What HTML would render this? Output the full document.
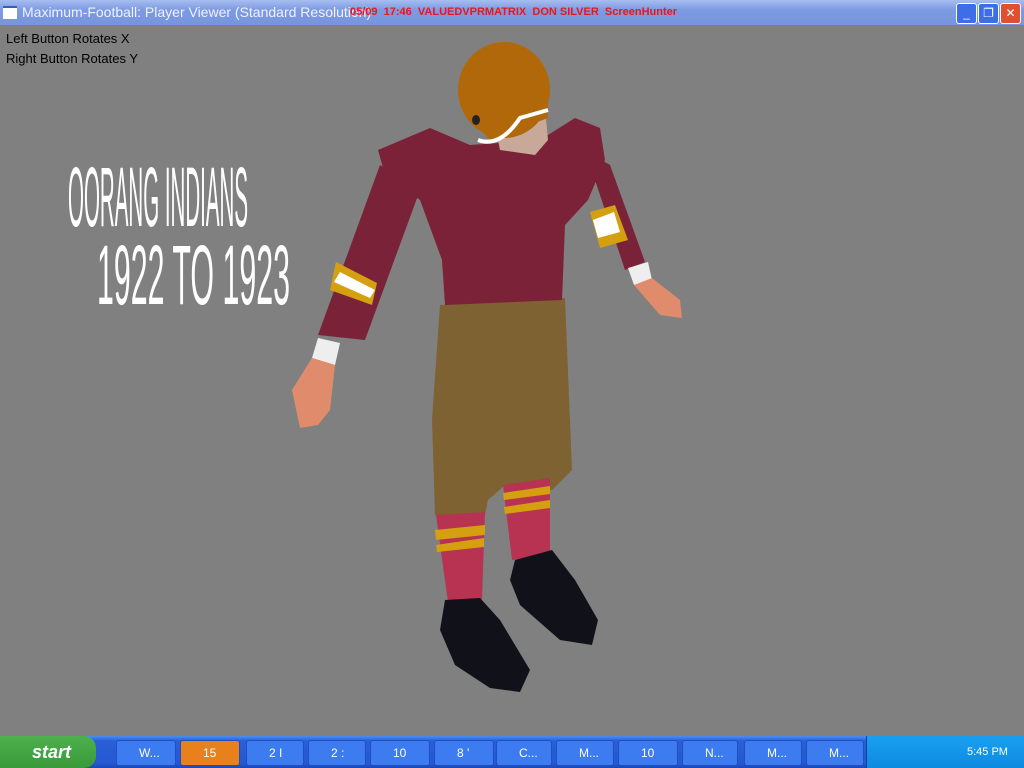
<!DOCTYPE html>
<html><head><meta charset="utf-8"><style>
html,body{margin:0;padding:0;width:1024px;height:768px;overflow:hidden;background:#808080;font-family:"Liberation Sans",sans-serif}
.tb{position:absolute;left:0;top:0;width:1024px;height:25px;background:linear-gradient(#a6bdf0,#7d9ae2 40%,#7894dc);}
.tb .t{position:absolute;left:22px;top:4px;color:#eef2ff;font-size:14px}
.tb .r{position:absolute;left:350px;top:6px;color:#e81818;font-size:11px;font-weight:bold}
.ic{position:absolute;left:3px;top:6px;width:14px;height:11px;background:#fff;border-top:2px solid #3060c0}
.btn{position:absolute;top:3px;width:19px;height:19px;border:1px solid #fff;border-radius:3px;background:#3d6ee8;color:#fff;font-size:12px;text-align:center;line-height:19px}
.lab{position:absolute;left:6px;font-size:13px;color:#000}
.task{position:absolute;left:0;top:736px;width:1024px;height:32px;background:linear-gradient(#4c8ef5,#2a5fd8 15%,#2558d2 85%,#1b47b8)}
.start{position:absolute;left:0;top:736px;width:96px;height:32px;background:linear-gradient(#4cb04c,#3a9a3a);border-radius:0 12px 12px 0;color:#fff;font-style:italic;font-weight:bold;font-size:18px;line-height:32px;text-indent:32px}
.it{position:absolute;top:740px;height:24px;background:#3c7cf0;border:1px solid #2050c0;border-radius:3px;color:#fff;font-size:12px;line-height:24px;text-indent:22px}
.tray{position:absolute;left:866px;top:736px;width:158px;height:32px;background:linear-gradient(#1aa0f0,#0d8ae0);border-left:1px solid #10409a;color:#fff;font-size:11px}
</style></head><body>
<div class="tb"><div class="ic"></div><div class="t">Maximum-Football: Player Viewer (Standard Resolution)</div>
<div class="r">05/09&nbsp; 17:46&nbsp; VALUEDVPRMATRIX&nbsp; DON SILVER&nbsp; ScreenHunter</div>
<div class="btn" style="left:956px">_</div><div class="btn" style="left:978px">❐</div><div class="btn" style="left:1000px;background:#e05030">✕</div></div>
<div class="lab" style="top:31px">Left Button Rotates X</div>
<div class="lab" style="top:51px">Right Button Rotates Y</div>
<svg width="1024" height="768" style="position:absolute;left:0;top:0">
<text x="68" y="226" font-family="Liberation Sans" font-size="84" fill="#fff" textLength="180" lengthAdjust="spacingAndGlyphs">OORANG INDIANS</text>
<text x="97" y="304" font-family="Liberation Sans" font-size="84" fill="#fff" textLength="193" lengthAdjust="spacingAndGlyphs">1922  TO 1923</text>
<polygon points="380,165 420,190 365,340 318,335" fill="#7a2238"/>
<polygon points="336,262 377,283 372,305 330,290" fill="#d4a010"/>
<polygon points="340,272 375,290 370,298 334,282" fill="#fff"/>
<polygon points="318,338 340,343 335,365 312,358" fill="#eee"/>
<polygon points="312,358 335,365 330,410 318,425 300,428 292,390" fill="#e08c6c"/>
<polygon points="585,150 610,165 645,262 625,270" fill="#7a2238"/>
<polygon points="590,212 615,205 628,240 600,248" fill="#d4a010"/>
<polygon points="593,220 614,212 620,232 598,238" fill="#fff"/>
<polygon points="628,268 648,262 652,280 634,285" fill="#eee"/>
<polygon points="634,285 652,278 680,300 682,318 660,315" fill="#e08c6c"/>
<polygon points="440,305 565,298 572,470 552,490 505,485 488,500 485,515 435,515 432,420" fill="#7e6232"/>
<polygon points="436,515 485,512 482,600 448,602" fill="#b83252"/>
<polygon points="435,530 485,525 485,535 436,540" fill="#d4a010"/>
<polygon points="436,545 484,538 484,547 437,552" fill="#d4a010"/>
<polygon points="503,485 550,478 550,555 512,560" fill="#b83252"/>
<polygon points="503,493 550,486 550,494 504,500" fill="#d4a010"/>
<polygon points="504,507 550,500 550,508 505,514" fill="#d4a010"/>
<polygon points="445,600 480,598 500,620 530,670 520,692 490,688 455,665 440,630" fill="#111119"/>
<polygon points="515,560 552,550 575,580 598,620 592,645 560,640 520,605 510,580" fill="#111119"/>
<polygon points="378,150 430,128 470,145 540,140 575,118 600,128 605,160 588,200 565,225 562,300 445,305 442,260 420,200 385,175" fill="#7c2238"/>
<polygon points="492,110 545,108 548,140 535,155 500,150" fill="#c8a898"/>
<ellipse cx="504" cy="90" rx="46" ry="48" fill="#b0680a"/>
<path d="M462,110 L490,140 L548,118 L548,105 L470,100Z" fill="#b0680a"/>
<path d="M478,140 Q500,148 520,118 L548,110" stroke="#fff" stroke-width="4" fill="none"/>
<ellipse cx="476" cy="120" rx="4" ry="5" fill="#222"/>
</svg>
<div class="task"></div>
<div class="start">start</div>
<div class="it" style="left:116px;width:58px">W...</div>
<div class="it" style="left:180px;width:58px;background:#e8801c">15</div>
<div class="it" style="left:246px;width:56px">2 I</div>
<div class="it" style="left:308px;width:56px">2 :</div>
<div class="it" style="left:370px;width:58px">10</div>
<div class="it" style="left:434px;width:58px">8 '</div>
<div class="it" style="left:496px;width:54px">C...</div>
<div class="it" style="left:556px;width:56px">M...</div>
<div class="it" style="left:618px;width:58px">10</div>
<div class="it" style="left:682px;width:54px">N...</div>
<div class="it" style="left:744px;width:56px">M...</div>
<div class="it" style="left:806px;width:56px">M...</div>
<div class="tray"><span style="position:absolute;left:100px;top:10px">5:45 PM</span></div>
</body></html>
